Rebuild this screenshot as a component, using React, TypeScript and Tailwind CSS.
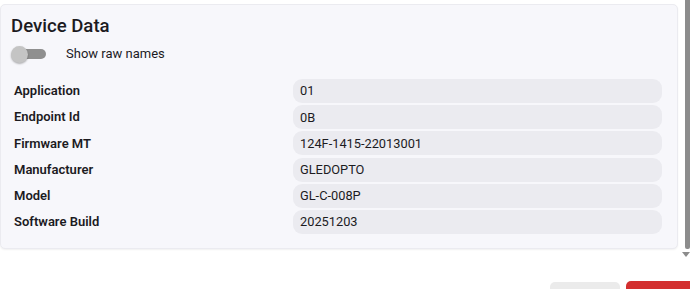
import React, { useState } from 'react';

const rows = [
    { label: 'Application', value: '01' },
    { label: 'Endpoint Id', value: '0B' },
    { label: 'Firmware MT', value: '124F-1415-22013001' },
    { label: 'Manufacturer', value: 'GLEDOPTO' },
    { label: 'Model', value: 'GL-C-008P' },
    { label: 'Software Build', value: '20251203' },
];

const App = () => {
    const [raw, setRaw] = useState(false);

    return (
        <div className="relative w-[690px] h-[289px] overflow-hidden bg-white font-['Roboto',sans-serif] text-[#1c1b1f]">
            <div className="pt-[4px] pr-[12px]">
                <div className="h-[245px] rounded-[5px] border border-[#ebebf0] bg-[#f7f7fb] pl-[10px] pr-[15px] pt-[10px] shadow-[0_1px_2px_rgba(0,0,0,0.06)]">
                    <h2 className="text-[18.6px] leading-[22px] font-medium">Device Data</h2>

                    <div className="mt-[8px] flex items-center h-[18px]">
                        <button
                            onClick={() => setRaw(!raw)}
                            className="relative w-[36px] h-[18px] flex items-center"
                            title="Show raw names"
                        >
                            <span className="absolute left-[5px] w-[30px] h-[10px] rounded-full bg-[#8f8f8f]"></span>
                            <span
                                className={`absolute w-[17px] h-[17px] rounded-full bg-[#c4c4c4] shadow-[0_1px_2px_rgba(0,0,0,0.3)] ${raw ? 'left-[19px]' : 'left-0'}`}
                            ></span>
                        </button>
                        <span className="ml-[19px] text-[13px]">Show raw names</span>
                    </div>

                    <div className="mt-[16px] flex flex-col gap-[2.2px]">
                        {rows.map((r) => (
                            <div key={r.label} className="flex items-center h-[24px]">
                                <div className="w-[282px] pl-[3px] text-[13px] font-semibold">{r.label}</div>
                                <div className="flex-1 h-full flex items-center rounded-[9px] bg-[#ebebf0] px-[7px] text-[12.8px]">
                                    {r.value}
                                </div>
                            </div>
                        ))}
                    </div>
                </div>
            </div>

            <div className="absolute right-0 top-0 w-[5px] h-[249px] bg-[#8c8c8c] rounded-b-[2px]"></div>
            <div className="absolute right-0 top-[252px] w-0 h-0 border-l-[4px] border-r-[4px] border-t-[5px] border-l-transparent border-r-transparent border-t-[#8c8c8c]"></div>

            <div className="absolute right-0 top-[281px] flex gap-[6px]">
                <div className="w-[70px] h-[20px] rounded-[5px] bg-[#ebebeb] mt-[1px]"></div>
                <div className="w-[64px] h-[20px] rounded-l-[5px] bg-[#d32f2f]"></div>
            </div>
        </div>
    );
};

export default App;
